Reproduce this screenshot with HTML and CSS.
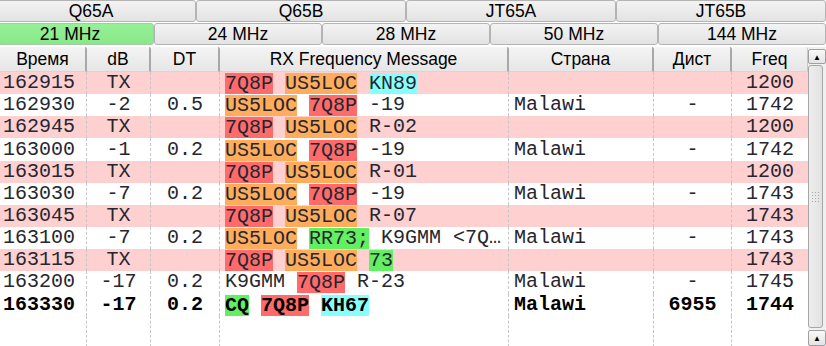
FILE: index.html
```html
<!DOCTYPE html>
<html lang="en">
<head>
    <meta charset="UTF-8">
    <title>Band Activity</title>
    <link rel="stylesheet" href="styles.css">
</head>
<body>
    <div class="tab-row modes">
        <button class="tab">Q65A</button>
        <button class="tab">Q65B</button>
        <button class="tab">JT65A</button>
        <button class="tab">JT65B</button>
    </div>
    <div class="tab-row bands">
        <button class="tab active">21 MHz</button>
        <button class="tab">24 MHz</button>
        <button class="tab">28 MHz</button>
        <button class="tab">50 MHz</button>
        <button class="tab">144 MHz</button>
    </div>

    <div class="activity">
        <table class="decodes">
            <colgroup>
                <col class="col-time">
                <col class="col-db">
                <col class="col-dt">
                <col class="col-msg">
                <col class="col-country">
                <col class="col-dist">
                <col class="col-freq">
            </colgroup>
            <thead>
                <tr>
                    <th>Время</th>
                    <th>dB</th>
                    <th>DT</th>
                    <th>RX Frequency Message</th>
                    <th>Страна</th>
                    <th>Дист</th>
                    <th>Freq</th>
                </tr>
            </thead>
            <tbody>
                <tr class="tx">
                    <td class="time">162915</td><td class="c">TX</td><td class="c"></td>
                    <td class="msg"><span class="hl my">7Q8P</span> <span class="hl dx">US5LOC</span> <span class="hl loc">KN89</span></td>
                    <td></td><td class="c"></td><td class="c">1200</td>
                </tr>
                <tr>
                    <td class="time">162930</td><td class="c">-2</td><td class="c">0.5</td>
                    <td class="msg"><span class="hl dx">US5LOC</span> <span class="hl my">7Q8P</span> -19</td>
                    <td class="country">Malawi</td><td class="c">-</td><td class="c">1742</td>
                </tr>
                <tr class="tx">
                    <td class="time">162945</td><td class="c">TX</td><td class="c"></td>
                    <td class="msg"><span class="hl my">7Q8P</span> <span class="hl dx">US5LOC</span> R-02</td>
                    <td></td><td class="c"></td><td class="c">1200</td>
                </tr>
                <tr>
                    <td class="time">163000</td><td class="c">-1</td><td class="c">0.2</td>
                    <td class="msg"><span class="hl dx">US5LOC</span> <span class="hl my">7Q8P</span> -19</td>
                    <td class="country">Malawi</td><td class="c">-</td><td class="c">1742</td>
                </tr>
                <tr class="tx">
                    <td class="time">163015</td><td class="c">TX</td><td class="c"></td>
                    <td class="msg"><span class="hl my">7Q8P</span> <span class="hl dx">US5LOC</span> R-01</td>
                    <td></td><td class="c"></td><td class="c">1200</td>
                </tr>
                <tr>
                    <td class="time">163030</td><td class="c">-7</td><td class="c">0.2</td>
                    <td class="msg"><span class="hl dx">US5LOC</span> <span class="hl my">7Q8P</span> -19</td>
                    <td class="country">Malawi</td><td class="c">-</td><td class="c">1743</td>
                </tr>
                <tr class="tx">
                    <td class="time">163045</td><td class="c">TX</td><td class="c"></td>
                    <td class="msg"><span class="hl my">7Q8P</span> <span class="hl dx">US5LOC</span> R-07</td>
                    <td></td><td class="c"></td><td class="c">1743</td>
                </tr>
                <tr>
                    <td class="time">163100</td><td class="c">-7</td><td class="c">0.2</td>
                    <td class="msg"><span class="hl dx">US5LOC</span> <span class="hl cq">RR73;</span> K9GMM &lt;7Q…</td>
                    <td class="country">Malawi</td><td class="c">-</td><td class="c">1743</td>
                </tr>
                <tr class="tx">
                    <td class="time">163115</td><td class="c">TX</td><td class="c"></td>
                    <td class="msg"><span class="hl my">7Q8P</span> <span class="hl dx">US5LOC</span> <span class="hl cq">73</span></td>
                    <td></td><td class="c"></td><td class="c">1743</td>
                </tr>
                <tr>
                    <td class="time">163200</td><td class="c">-17</td><td class="c">0.2</td>
                    <td class="msg">K9GMM <span class="hl my">7Q8P</span> R-23</td>
                    <td class="country">Malawi</td><td class="c">-</td><td class="c">1745</td>
                </tr>
                <tr class="latest">
                    <td class="time">163330</td><td class="c">-17</td><td class="c">0.2</td>
                    <td class="msg"><span class="hl cq">CQ</span> <span class="hl my">7Q8P</span> <span class="hl loc">KH67</span></td>
                    <td class="country">Malawi</td><td class="c">6955</td><td class="c">1744</td>
                </tr>
                <tr class="filler">
                    <td></td><td></td><td></td><td></td><td></td><td></td><td></td>
                </tr>
            </tbody>
        </table>

        <div class="scrollbar">
            <div class="arrow top">&#9650;</div>
            <div class="thumb"><span class="grip"></span></div>
            <div class="arrow bottom">&#9650;</div>
        </div>
    </div>
</body>
</html>
```

FILE: styles.css
```css
body {
    margin: 0;
    width: 826px;
    height: 346px;
    overflow: hidden;
    background-color: #fff;
    font-family: 'Liberation Sans', Arial, sans-serif;
    color: #000;
}

.tab-row {
    display: flex;
    width: 840px;
    margin-left: -14px;
    height: 22px;
    margin-bottom: 1px;
}

.bands {
    margin-bottom: 2px;
}

.tab {
    flex: 1;
    margin: 0;
    padding: 0;
    border: 1px solid #b4b4b4;
    border-radius: 3px;
    background: linear-gradient(#f3f3f3, #e3e3e3);
    font-family: 'Liberation Sans', Arial, sans-serif;
    font-size: 17.5px;
    color: #000;
    line-height: 20px;
}

.tab.active {
    background: linear-gradient(#96f096, #88e888);
    border-color: #a8c8a8;
}

.activity {
    display: flex;
    height: 300px;
}

.decodes {
    width: 808px;
    table-layout: fixed;
    border-collapse: separate;
    border-spacing: 0;
}

.col-time { width: 87px; }
.col-db { width: 64px; }
.col-dt { width: 69px; }
.col-msg { width: 289px; }
.col-country { width: 145px; }
.col-dist { width: 78px; }
.col-freq { width: 76px; }

.decodes th {
    height: 25px;
    padding: 0;
    box-sizing: border-box;
    background: linear-gradient(#f4f4f4, #e6e6e6);
    border-right: 2px solid #a8a8a8;
    border-bottom: 1px solid #d6d6d6;
    border-radius: 2px 2px 0 0;
    font-weight: normal;
    font-size: 17.5px;
    text-align: center;
    line-height: 22px;
}

.decodes th:last-child {
    border-right: 1px solid #c8c8c8;
}

.decodes td {
    height: 22px;
    padding: 0 0 0 4px;
    box-sizing: border-box;
    border-right: 1px dashed #c6c6c6;
    font-family: 'Liberation Mono', 'Courier New', monospace;
    font-size: 20px;
    line-height: 22px;
    white-space: nowrap;
    overflow: hidden;
    color: #262630;
}

.decodes td:last-child {
    border-right: none;
}

.decodes td.time {
    padding-left: 3px;
}

.decodes td.c {
    text-align: center;
    padding: 0;
}

.decodes td.msg,
.decodes td.country {
    padding-left: 5px;
}

.decodes tr.tx td {
    background-color: #ffd0d0;
}

.decodes tr.latest td {
    font-weight: bold;
    color: #000;
}

.decodes tr.filler td {
    height: 31px;
}

.hl {
    display: inline-block;
    height: 21px;
    line-height: 21px;
    vertical-align: top;
    margin-top: 1px;
}

.hl.my {
    background-color: #ff6b6b;
}

.hl.dx {
    background-color: #ffad5c;
}

.hl.loc {
    background-color: #86ffff;
}

.hl.cq {
    background-color: #62f062;
}

.scrollbar {
    width: 18px;
    display: flex;
    flex-direction: column;
    background-color: #f0f0f0;
    padding-top: 2px;
    box-sizing: border-box;
}

.arrow {
    height: 15px;
    border: 1px solid #a0a0a0;
    border-radius: 2px;
    background: linear-gradient(#f8f8f8, #e4e4e4);
    font-size: 8px;
    line-height: 15px;
    text-align: center;
    color: #000;
    box-sizing: border-box;
}

.arrow.bottom {
    height: 16px;
    margin-bottom: 1px;
}

.thumb {
    flex: 1;
    margin: 1px 3px 2px 0;
    border: 1px solid #a6a6a6;
    border-radius: 3px;
    background: linear-gradient(90deg, #eeeeee, #e2e2e2);
    display: flex;
    align-items: center;
    justify-content: center;
}

.grip {
    width: 10px;
    height: 12px;
    background-image: radial-gradient(circle, #a8a8a8 0.8px, transparent 1px);
    background-size: 3px 3px;
}
```
